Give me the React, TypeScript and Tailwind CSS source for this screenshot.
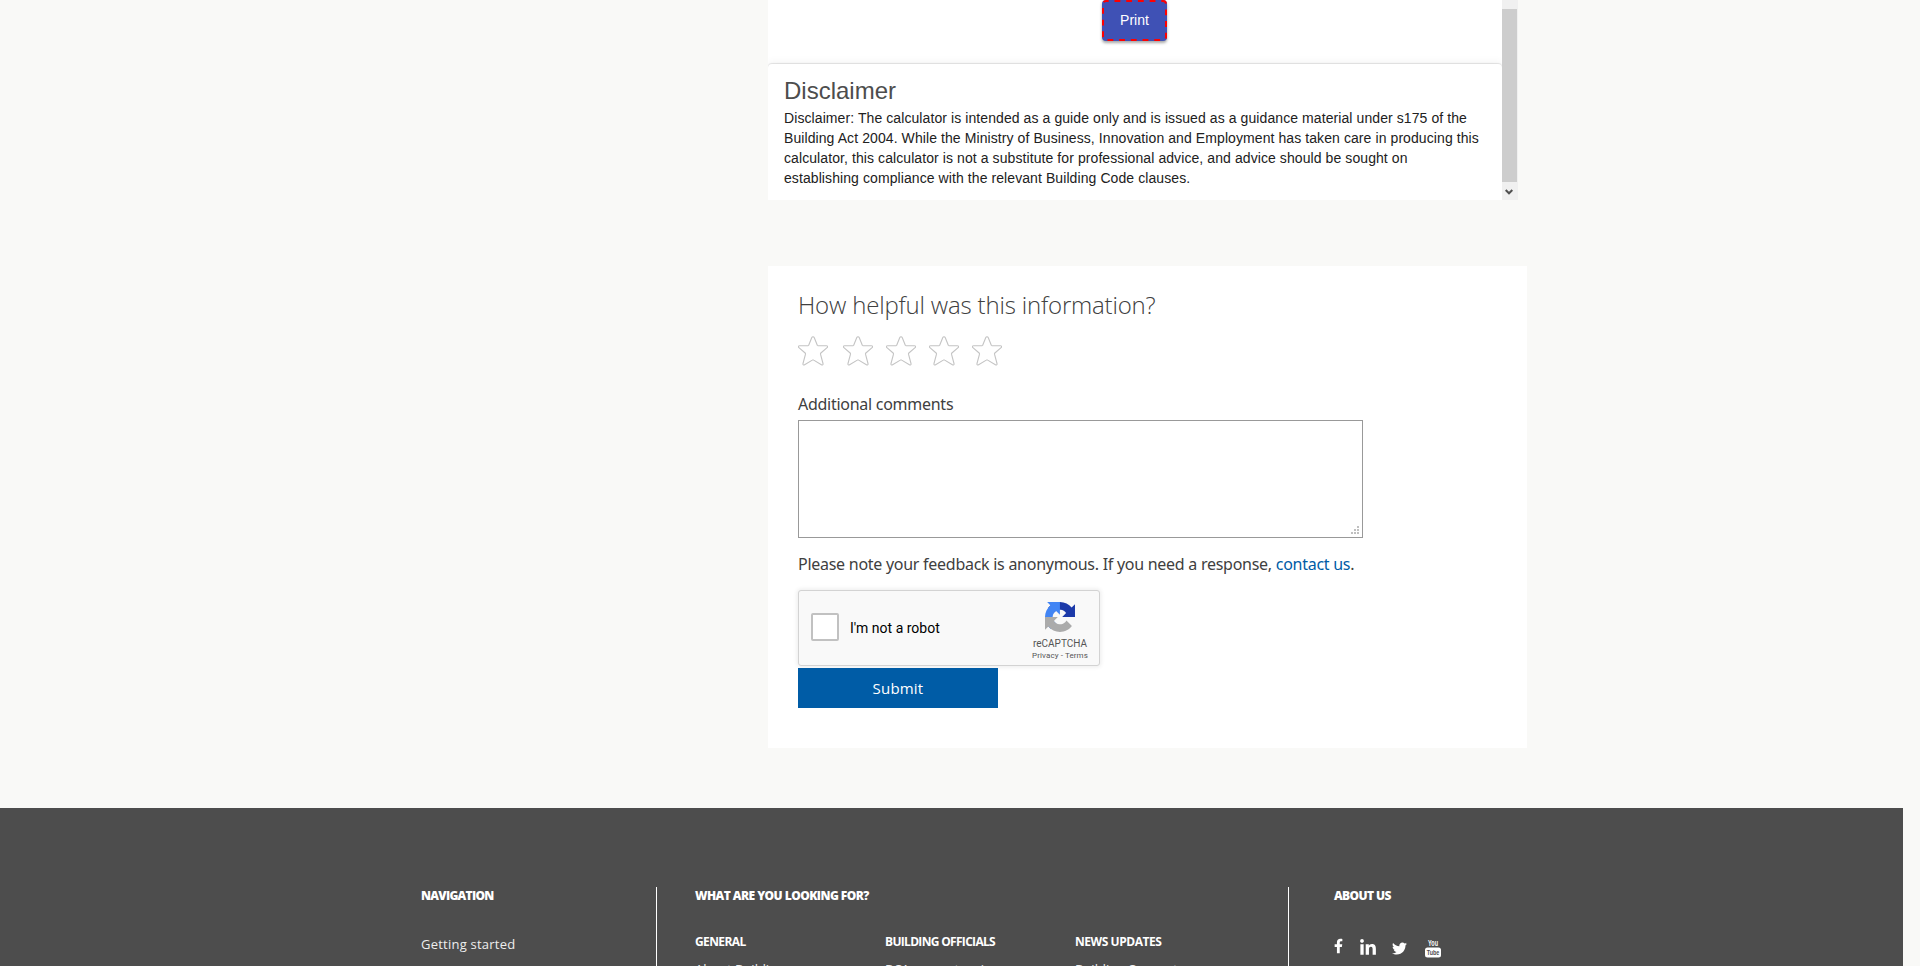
import React from "react";
import { FaFacebookF, FaLinkedinIn, FaTwitter } from "react-icons/fa";

const starPath =
  "M15 .8c.6 0 1 .3 1.300 1l3 7.500c.2.4.4.5.8.500h8.300c1.300 0 1.600 1.100.7 1.900l-6.200 5.300c-.4.4-.5.7-.4 1.200l2.500 9.300c.3 1.300-.6 1.900-1.600 1.200l-7.700-4.600a1.300 1.300 0 0 0-1.400 0l-7.700 4.600c-1 .7-1.900.1-1.600-1.200l2.500-9.300c.1-.5 0-.8-.4-1.200L.9 11.700C0 10.900.3 9.800 1.600 9.800h8.300c.4 0 .6-.1.8-.5l3-7.500c.3-.7.7-1 1.300-1Z";

function Star() {
  return (
    <svg width="30" height="30" viewBox="0 0 30 30" fill="none" stroke="#c4c4c4" strokeWidth="1.1">
      <path d={starPath} />
    </svg>
  );
}

function RecaptchaLogo() {
  return (
    <svg width="30" height="30" viewBox="0 0 64 64">
      <path fill="#1c3aa9" d="M64 31.955l-.033-1.370V4.687l-7.160 7.160C50.948 4.674 42.033.093 32.050.093c-10.400 0-19.622 4.960-25.458 12.640l11.736 11.860a15.550 15.550 0 0 1 4.754-5.334c2.050-1.600 4.952-2.906 8.968-2.906.485 0 .86.057 1.135.163 4.976.393 9.288 3.140 11.828 7.124l-8.307 8.307L64 31.953" />
      <path fill="#4285f4" d="M31.862.094l-1.370.033H4.594l7.160 7.160C4.580 13.147 0 22.060 0 32.046c0 10.400 4.960 19.622 12.640 25.458L24.500 45.768a15.550 15.550 0 0 1-5.334-4.754c-1.600-2.050-2.906-4.952-2.906-8.968 0-.485.057-.86.163-1.135.393-4.976 3.140-9.288 7.124-11.828l8.307 8.307L31.860.095" />
      <path fill="#ababab" d="M.001 32.045l.033 1.370v25.898l7.160-7.160c5.860 7.173 14.774 11.754 24.760 11.754 10.400 0 19.622-4.960 25.458-12.640l-11.736-11.860a15.550 15.550 0 0 1-4.754 5.334c-2.050 1.600-4.952 2.906-8.968 2.906-.485 0-.86-.057-1.135-.163-4.976-.393-9.288-3.140-11.828-7.124l8.307-8.307-27.295.001" />
    </svg>
  );
}

function YouTubeIcon() {
  return (
    <svg width="16" height="19" viewBox="0 0 16 19" fontFamily="Liberation Sans, sans-serif" fontWeight="bold" textAnchor="middle">
      <text x="8" y="7.300" fontSize="8.500" fill="#fff" textLength="10" lengthAdjust="spacingAndGlyphs">You</text>
      <rect x="0" y="8.500" width="16" height="10" rx="2.500" fill="#fff" />
      <text x="8" y="16.400" fontSize="8" fill="#4d4d4d" textLength="12.500" lengthAdjust="spacingAndGlyphs">Tube</text>
    </svg>
  );
}

export default function App() {
  return (
    <div className="h-[966px] w-full overflow-hidden bg-[#f9f9f7] font-['Open_Sans',sans-serif]">
      <main className="flex h-[808px] flex-col pl-[768px]">
        <section className="flex h-[200px] w-[750px] shrink-0 bg-white font-['Liberation_Sans',sans-serif]">
          <div className="w-[734px]">
            <div className="flex h-[64px] items-start pl-[334px]">
              <button className="relative h-[41px] w-[65px] rounded-[4px] bg-[#3f51b5] pb-px text-sm text-white shadow-[0_2px_3px_rgba(0,0,0,0.35)]">
                Print
                <svg className="absolute inset-0" width="65" height="41" viewBox="0 0 65 41" fill="none" stroke="#f00" strokeWidth="2">
                  <rect x="1" y="1" width="63" height="39" rx="3" strokeDasharray="5.850 5.850" strokeDashoffset="3.200" />
                </svg>
              </button>
            </div>
            <div className="h-[136px] w-[734px] rounded-t-[4px] bg-white px-4 pt-3 shadow-[0_-1px_1px_rgba(0,0,0,0.1),0_-2px_8px_rgba(0,0,0,0.05)] [clip-path:inset(-8px_0_0_0)]">
              <h2 className="text-2xl leading-[30px] text-[#4d4d4d]">Disclaimer</h2>
              <p className="mt-[2px] text-sm leading-5 tracking-[0.085px] whitespace-nowrap text-[#212121]">
                Disclaimer: The calculator is intended as a guide only and is issued as a guidance material under s175 of the<br />
                Building Act 2004. While the Ministry of Business, Innovation and Employment has taken care in producing this<br />
                calculator, this calculator is not a substitute for professional advice, and advice should be sought on<br />
                establishing compliance with the relevant Building Code clauses.
              </p>
            </div>
          </div>
          <div className="flex w-4 flex-col bg-[#f0f0f0]">
            <div className="mt-[9px] h-[173px] w-[15px] bg-[#cdcdcd]" />
            <svg className="mt-[7px] ml-[3px]" width="8" height="7" viewBox="0 0 8 7" fill="none" stroke="#505050" strokeWidth="2">
              <path d="M.7 1 4 4.300 7.300 1" />
            </svg>
          </div>
        </section>

        <section className="mt-[66px] h-[482px] w-[759px] shrink-0 bg-white pl-[30px]">
          <h2 className="h-[70px] pt-[21px] text-[24px] leading-9 font-light tracking-[-0.18px] whitespace-nowrap text-[#404040]">How helpful was this information?</h2>
          <div className="flex h-[30px] gap-[13px]">
            <div className="mr-[2px] size-[30px]"><Star /></div>
            <Star /><Star /><Star /><Star />
          </div>
          <label className="mt-[26px] block h-7 font-['Noto_Sans',sans-serif] text-[16px] leading-6 tracking-[-0.27px] text-[#404040]">Additional comments</label>
          <div className="flex h-[118px] w-[565px] items-end justify-end border border-[#999] bg-white p-[3px]">
            <svg width="8" height="8" viewBox="0 0 8 8" fill="#c0c0c0">
              <path d="M6 0h2v2H6zM3 3h2v2H3zM6 3h2v2H6zM0 6h2v2H0zM3 6h2v2H3zM6 6h2v2H6z" />
            </svg>
          </div>
          <p className="mt-[14px] h-[38px] font-['Noto_Sans',sans-serif] text-[16px] leading-6 tracking-[-0.27px] whitespace-nowrap text-[#404040]">
            Please note your feedback is anonymous. If you need a response, <a className="text-[#005ca6]">contact us</a>.
          </p>
          <div className="flex h-[76px] w-[302px] rounded-[3px] border border-[#d3d3d3] bg-[#f9f9f9] font-['Roboto',sans-serif] shadow-[0_0_4px_1px_rgba(0,0,0,0.08)]">
            <div className="mt-[22px] ml-3 size-7 rounded-[2px] border-2 border-[#c1c1c1] bg-white" />
            <span className="mt-[29px] ml-[11px] text-sm leading-[17px] text-black">I'm not a robot</span>
            <div className="mt-[11px] mr-[10px] ml-auto flex w-[58px] flex-col items-center text-[#555]">
              <RecaptchaLogo />
              <span className="mt-[6px] text-[10px] leading-3">reCAPTCHA</span>
              <span className="text-[8px] leading-[11px] tracking-[0.1px] whitespace-nowrap">Privacy - Terms</span>
            </div>
          </div>
          <button className="mt-[2px] block h-10 w-[200px] bg-[#005ca6] text-[15px] tracking-[0.2px] text-white">Submit</button>
        </section>
      </main>

      <footer className="flex h-[158px] w-[1903px] overflow-hidden bg-[#4d4d4d] pt-[79px] pl-[421px] text-white">
        <div className="w-[235px] shrink-0">
          <h3 className="h-[46px] pt-px text-[12px] leading-4 font-extrabold tracking-[-0.7px]">NAVIGATION</h3>
          <a className="block text-[13px] leading-[22px] tracking-[0.23px] text-[#eee]">Getting started</a>
        </div>
        <div className="w-[632px] shrink-0 border-l border-white pl-[38px]">
          <h3 className="h-[46px] pt-px text-[12px] leading-4 font-extrabold tracking-[-0.55px]">WHAT ARE YOU LOOKING FOR?</h3>
          <div className="grid grid-cols-[190px_190px_180px] text-[13px] leading-6 text-[#eee]">
            <div>
              <h4 className="h-6 pt-px text-[12px] leading-4 font-bold tracking-[-0.6px] text-white">GENERAL</h4>
              <a>About Building</a>
            </div>
            <div>
              <h4 className="h-6 pt-px text-[12px] leading-4 font-bold tracking-[-0.68px] text-white">BUILDING OFFICIALS</h4>
              <a>BCA competencies</a>
            </div>
            <div>
              <h4 className="h-6 pt-px text-[12px] leading-4 font-bold tracking-[-0.45px] text-white">NEWS UPDATES</h4>
              <a>Building Connect</a>
            </div>
          </div>
        </div>
        <div className="border-l border-white pl-[45px]">
          <h3 className="h-[46px] pt-px text-[12px] leading-4 font-extrabold tracking-[-0.6px]">ABOUT US</h3>
          <div className="flex pt-[5px]">
            <FaFacebookF className="h-4 w-[9px]" />
            <FaLinkedinIn className="mt-px ml-[16px] size-[18px]" />
            <FaTwitter className="mt-[3px] ml-[15px] size-[15px]" />
            <div className="mt-px ml-[18px]"><YouTubeIcon /></div>
          </div>
        </div>
      </footer>
    </div>
  );
}
